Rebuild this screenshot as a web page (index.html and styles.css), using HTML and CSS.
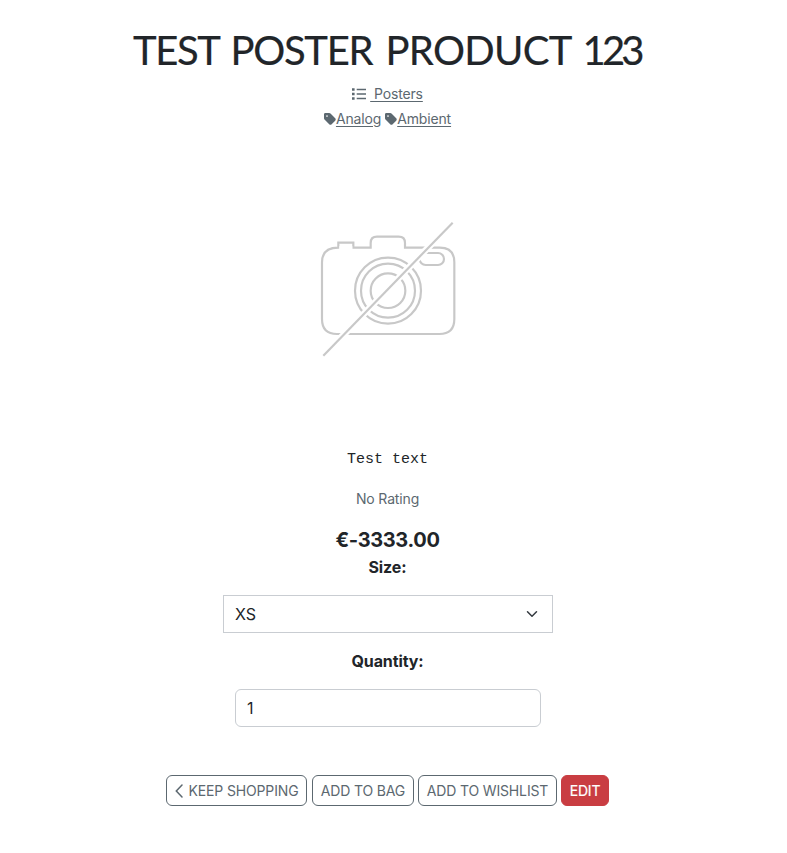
FILE: index.html
```html
<!DOCTYPE html>
<html lang="en">
<head>
<meta charset="utf-8">
<title>Test poster product 123</title>
<link rel="stylesheet" href="styles.css">
</head>
<body>
<main class="product">
  <h1 class="title"><span class="w1">TEST</span> <span class="w2">POSTER</span> <span class="w3">PRODUCT</span> <span class="w4">123</span></h1>
  <div class="meta category">
    <svg class="list-icon" viewBox="0 0 14 12"><path d="M0 .3h2.6v2.4H0zM0 4.8h2.6v2.4H0zM0 9.3h2.6v2.4H0zM4.7 .7H14v1.6H4.7zM4.7 5.2H14v1.6H4.7zM4.7 9.700H14v1.600H4.700z"/></svg>
    <a href="#">&nbsp;Posters</a>
  </div>
  <div class="meta tags">
    <svg class="tag-icon" viewBox="0 0 448 448"><path d="M0 48v149.500c0 17 6.700 33.300 18.700 45.300l176 176c25 25 65.500 25 90.500 0L418.700 285.300c25-25 25-65.500 0-90.500l-176-176C230.700 6.700 214.500 0 197.500 0H48C21.500 0 0 21.500 0 48zm112 32a32 32 0 1 1 0 64 32 32 0 1 1 0-64z"/></svg><a href="#" class="analog">Analog</a>
    <svg class="tag-icon" viewBox="0 0 448 448"><path d="M0 48v149.500c0 17 6.700 33.300 18.700 45.300l176 176c25 25 65.500 25 90.500 0L418.700 285.300c25-25 25-65.500 0-90.500l-176-176C230.700 6.700 214.500 0 197.500 0H48C21.500 0 0 21.500 0 48zm112 32a32 32 0 1 1 0 64 32 32 0 1 1 0-64z"/></svg><a href="#" class="ambient">Ambient</a>
  </div>
  <svg class="photo" viewBox="0 0 480 480" fill="none" stroke="#c8c8c8" stroke-width="6.500">
    <path d="M130 113h52V99q0-19 19-19h65q19 0 19 19v14h104q44 0 44 44v170q0 45-45 45H81q-45 0-45-45V157q0-44 49-44V98h45z"/>
    <path d="M88 113h39" stroke="#fff" stroke-width="9"/>
    <circle cx="234" cy="242" r="99"/><circle cx="234" cy="242" r="81"/><circle cx="234" cy="242" r="52"/>
    <rect x="329" y="129" width="73" height="36" rx="18"/>
    <path d="M44 433L425 40" stroke="#fff" stroke-width="20"/>
    <path d="M40 437L428 38"/>
  </svg>
  <p class="description">Test text</p>
  <p class="rating">No Rating</p>
  <p class="price">€-3333.00</p>
  <p class="label size">Size:</p>
  <div class="select"><span>XS</span><svg class="chevron" viewBox="0 0 16 16"><path d="m2 5 6 6 6-6"/></svg></div>
  <p class="label quantity">Quantity:</p>
  <div class="input">1</div>
  <div class="actions">
    <a class="btn keep"><svg class="back" viewBox="0 0 8 14"><path d="M7 1 1.300 7 7 13"/></svg><span>KEEP SHOPPING</span></a>
    <a class="btn bag">ADD TO BAG</a>
    <a class="btn wish">ADD TO WISHLIST</a>
    <a class="btn edit">EDIT</a>
  </div>
</main>
</body>
</html>
```
FILE: styles.css
```css
* { box-sizing: border-box; }
body { margin: 0; background: #fff; color: #212529; font: 16px/24px Inter, "Liberation Sans", sans-serif; }
p, h1 { margin: 0; }
.product { display: flex; flex-direction: column; align-items: center; width: 775px; padding-top: 26px; }
.title { width: 509px; font: 400 40px/48px Lato, sans-serif; white-space: nowrap; display: flex; -webkit-text-stroke: .2px #212529; }
.w1 { width: 97.5px; letter-spacing: -1.4px; }
.w2 { width: 155px; letter-spacing: -1.3px; }
.w3 { width: 197px; letter-spacing: -.7px; }
.w4 { letter-spacing: -3.8px; }
.meta { display: flex; align-items: center; height: 25px; font-size: 14px; letter-spacing: -.15px; color: #5c6870; white-space: nowrap; }
.meta a { color: inherit; text-underline-offset: 2px; }
.meta svg { fill: #5c6870; }
.category { margin-top: 7px; }
.list-icon { width: 14px; height: 12px; margin-right: 4px; }
.tag-icon { width: 12px; height: 12px; }
.analog { margin-right: 4px; }
.photo { width: 160px; height: 160px; margin: 79px 0 0 5px; }
.description { margin-top: 78px; font: 15px/24px "Liberation Mono", monospace; }
.rating { margin-top: 15px; font-size: 14px; letter-spacing: -.15px; color: #5c6870; }
.price { margin-top: 17px; font-size: 20px; font-weight: 700; letter-spacing: -.35px; }
.label { font-weight: 700; letter-spacing: -.1px; }
.size { margin-top: 3px; }
.select, .input { display: flex; align-items: center; height: 38px; border: 1px solid #c9cdd2; padding: 0 11px; }
.select { width: 330px; margin: 16px 0 0 1px; justify-content: space-between; }
.chevron { width: 12px; height: 12px; margin-right: 3px; fill: none; stroke: #343a40; stroke-width: 2; stroke-linecap: round; stroke-linejoin: round; }
.quantity { margin-top: 16px; }
.input { width: 306px; margin: 16px 0 0 1px; border-radius: 6px; }
.actions { display: flex; gap: 4px; margin-top: 48px; }
.btn { display: flex; align-items: center; justify-content: center; height: 31px; border: 1px solid #5c6870; border-radius: 6px; color: #5c6870; font-size: 14px; letter-spacing: -.15px; white-space: nowrap; }
.back { width: 8px; height: 14px; margin-right: 6px; fill: none; stroke: #5c6870; stroke-width: 1.5; stroke-linecap: round; }
.keep { width: 141px; margin-right: 1px; }
.bag { width: 102px; }
.wish { width: 139px; }
.edit { width: 48px; background: #c93d42; border-color: #c93d42; color: #fff; -webkit-text-stroke: .2px #fff; }
```
